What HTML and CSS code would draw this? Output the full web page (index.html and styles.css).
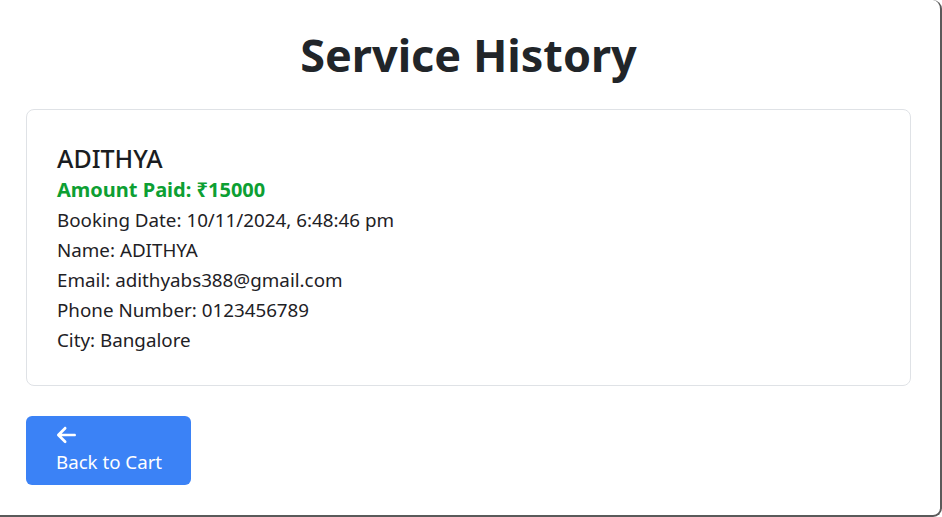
FILE: index.html
```html
<!DOCTYPE html>
<html lang="en">
<head>
<meta charset="utf-8">
<title>Service History</title>
<link rel="stylesheet" href="styles.css">
</head>
<body>
<div class="window">
  <h1 class="title">Service History</h1>
  <div class="card">
    <h3 class="card-name">ADITHYA</h3>
    <p class="amount">Amount Paid: ₹15000</p>
    <p class="line">Booking Date: 10/11/2024, 6:48:46 pm</p>
    <p class="line">Name: ADITHYA</p>
    <p class="line">Email: adithyabs388@gmail.com</p>
    <p class="line">Phone Number: 0123456789</p>
    <p class="line">City: Bangalore</p>
  </div>
  <button class="back-btn" type="button">
    <svg class="arrow" width="19" height="22" viewBox="0 0 448 512" aria-hidden="true"><path fill="#fff" d="M9.4 233.4c-12.5 12.5-12.5 32.8 0 45.3l160 160c12.5 12.5 32.8 12.5 45.3 0s12.5-32.8 0-45.3L109.2 288H416c17.7 0 32-14.3 32-32s-14.3-32-32-32H109.3L214.6 118.6c12.5-12.5 12.5-32.8 0-45.3s-32.8-12.5-45.3 0l-160 160z"/></svg>
    <span class="btn-label">Back to Cart</span>
  </button>
</div>
</body>
</html>
```

FILE: styles.css
```css
* { box-sizing: border-box; }
html, body { margin: 0; padding: 0; background: #fff; }
body {
  font-family: "Noto Sans", "Open Sans", "DejaVu Sans", sans-serif;
  color: #212529;
}
.window {
  width: 942px;
  height: 517px;
  background: #fff;
  border-right: 2px solid #5a5a5a;
  border-bottom: 2px solid #5a5a5a;
  border-radius: 0 9px 9px 0;
  padding: 25px 29px 0 26px;
  overflow: hidden;
}
.title {
  margin: 0;
  text-align: center;
  font-size: 45px;
  font-weight: 700;
  line-height: 60px;
  color: #212529;
}
.card {
  margin-top: 24px;
  border: 1px solid #dfe2e6;
  border-radius: 8px;
  padding: 32px 30px 30px 30px;
}
.card-name {
  margin: 0;
  font-size: 25px;
  font-weight: 500;
  line-height: 32px;
  color: #1a1d21;
}
.amount {
  margin: 0;
  font-size: 20px;
  font-weight: 700;
  line-height: 31px;
  color: #0d9f33;
}
.line {
  margin: 0;
  font-size: 18.8px;
  line-height: 30px;
  color: #1e2125;
}
.back-btn {
  margin-top: 30px;
  width: 165px;
  height: 69px;
  border: none;
  border-radius: 6px;
  background: #3b82f6;
  color: #fff;
  font-family: inherit;
  font-size: 18.7px;
  padding: 8px 0 0 30px;
  display: flex;
  flex-direction: column;
  align-items: flex-start;
  text-align: left;
  white-space: nowrap;
}
.arrow { display: block; flex-shrink: 0; margin-left: 1px; }
.btn-label { display: block; line-height: 28px; margin-top: 2px; flex-shrink: 0; }
```
